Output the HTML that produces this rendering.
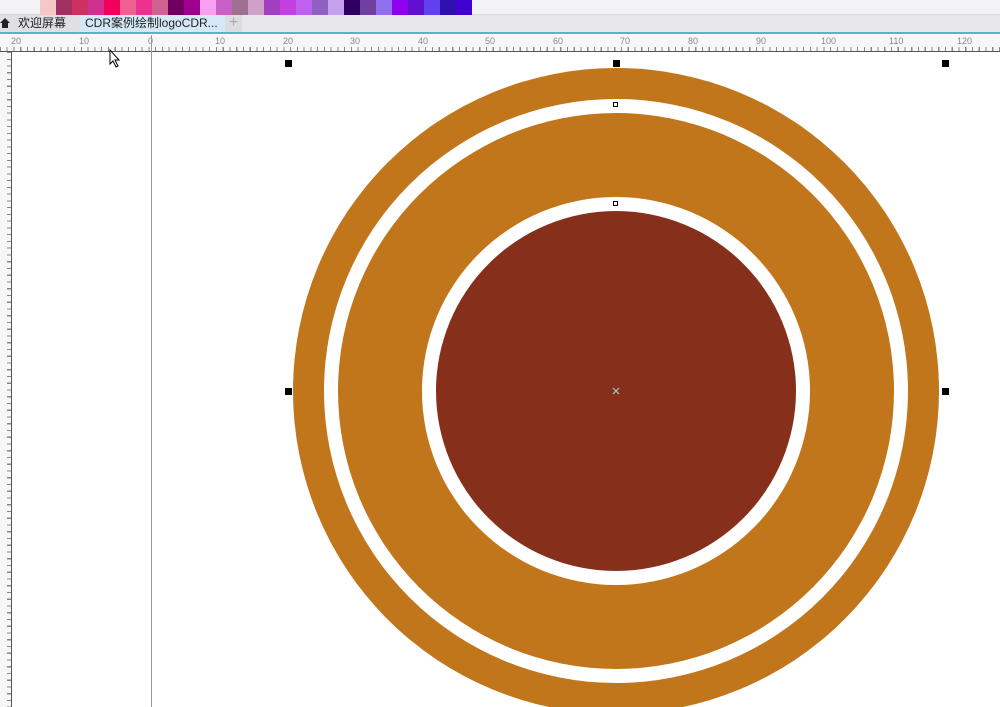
<!DOCTYPE html>
<html><head><meta charset="utf-8"><style>
*{margin:0;padding:0;box-sizing:border-box}
body{width:1000px;height:707px;overflow:hidden;background:#fff;font-family:"Liberation Sans","Noto Sans CJK SC",sans-serif;position:relative}
.top{position:absolute;left:0;top:0;width:1000px;height:15px;background:#f3f2f5;border-bottom:1px solid #d8d8dc}
.pal{position:absolute;left:40px;top:0;height:15px;display:flex}
.pal div{width:16px;height:15px}
.tabs{position:absolute;left:0;top:15px;width:1000px;height:19px;background:#e8e8ec;border-bottom:2px solid #4cb8c8;font-size:12px;color:#222}
.t1{position:absolute;left:0;top:0;height:17px;width:80px;padding-left:18px;line-height:17px;background:#e0e0e4}
.t2{position:absolute;left:80px;top:0;height:17px;width:145px;padding-left:5px;line-height:17px;background:#d4e8f6}
.t3{position:absolute;left:225px;top:0;width:17px;height:17px;background:#dcdce0;color:#aaa;text-align:center;line-height:16px;font-size:16px}
.hr{position:absolute;left:0;top:35px;width:1000px;height:17px;background:#f7f7f8;border-bottom:1px solid #555}
.vr{position:absolute;left:0;top:52px;width:12px;height:655px;background:#f7f7f8;border-right:1px solid #555}
.lbl{position:absolute;font-size:9px;color:#888;top:1px}
.h{position:absolute;width:7px;height:7px;background:#000}
</style></head><body>
<div class="top"><div class="pal">
<div style="background:#f5c8c8"></div><div style="background:#a03060"></div><div style="background:#d03060"></div><div style="background:#d03090"></div><div style="background:#f0005a"></div><div style="background:#f06090"></div><div style="background:#f03090"></div><div style="background:#d06090"></div><div style="background:#700060"></div><div style="background:#a00090"></div><div style="background:#f8a0f0"></div><div style="background:#c860c8"></div><div style="background:#a07090"></div><div style="background:#d0a0c8"></div><div style="background:#a040c0"></div><div style="background:#c040e0"></div><div style="background:#c060f0"></div><div style="background:#9060c0"></div><div style="background:#c8a0f0"></div><div style="background:#300060"></div><div style="background:#7040a0"></div><div style="background:#9070f0"></div><div style="background:#9000f0"></div><div style="background:#6010d0"></div><div style="background:#6040f0"></div><div style="background:#3010b0"></div><div style="background:#4000d0"></div>
</div></div>
<div class="tabs">
<div class="t1"><span style="position:absolute;left:0;top:3px;width:0;height:0;border-left:5px solid transparent;border-right:5px solid transparent;border-bottom:5px solid #222"></span><span style="position:absolute;left:2px;top:8px;width:6px;height:5px;background:#222"></span>欢迎屏幕</div>
<div class="t2">CDR案例绘制logoCDR...</div>
<div class="t3">+</div>
</div>
<div class="hr">
<span class="lbl" style="left:11px">20</span><span class="lbl" style="left:79px">10</span><span class="lbl" style="left:148px">0</span><span class="lbl" style="left:215px">10</span><span class="lbl" style="left:283px">20</span><span class="lbl" style="left:350px">30</span><span class="lbl" style="left:418px">40</span><span class="lbl" style="left:485px">50</span><span class="lbl" style="left:553px">60</span><span class="lbl" style="left:620px">70</span><span class="lbl" style="left:688px">80</span><span class="lbl" style="left:756px">90</span><span class="lbl" style="left:821px">100</span><span class="lbl" style="left:889px">110</span><span class="lbl" style="left:957px">120</span>
<div style="position:absolute;left:0;bottom:0;width:1000px;height:4px;background:repeating-linear-gradient(90deg,#888 0 1px,transparent 1px 6.75px)"></div>
</div>
<div class="vr"><div style="position:absolute;right:0;top:0;width:4px;height:655px;background:repeating-linear-gradient(180deg,#888 0 1px,transparent 1px 6.75px)"></div></div>
<div style="position:absolute;left:151px;top:35px;width:1px;height:672px;background:#999"></div>
<svg style="position:absolute;left:0;top:0" width="1000" height="707">
<defs><clipPath id="c"><rect x="12" y="53" width="988" height="654"/></clipPath></defs>
<g clip-path="url(#c)">
<circle cx="616" cy="391" r="323" fill="#c2761c"/>
<circle cx="616" cy="391" r="292" fill="#fff"/>
<circle cx="616" cy="391" r="278" fill="#c2761c"/>
<circle cx="616" cy="391" r="194" fill="#fff"/>
<circle cx="616" cy="391" r="180" fill="#86301c"/>
</g>
<rect x="613.5" y="102.5" width="4" height="4" fill="#fff" stroke="#000"/>
<rect x="613.5" y="201.5" width="4" height="4" fill="#fff" stroke="#000"/>
<path d="M613 388l6 6M619 388l-6 6" stroke="#9cc" stroke-width="1.2"/>
<path d="M110 50v14l3-3 3 6 2-1-3-6h4z" fill="#fff" stroke="#000"/>
</svg>
<div class="h" style="left:285px;top:60px"></div><div class="h" style="left:613px;top:60px"></div><div class="h" style="left:942px;top:60px"></div>
<div class="h" style="left:285px;top:388px"></div><div class="h" style="left:942px;top:388px"></div>
</body></html>
